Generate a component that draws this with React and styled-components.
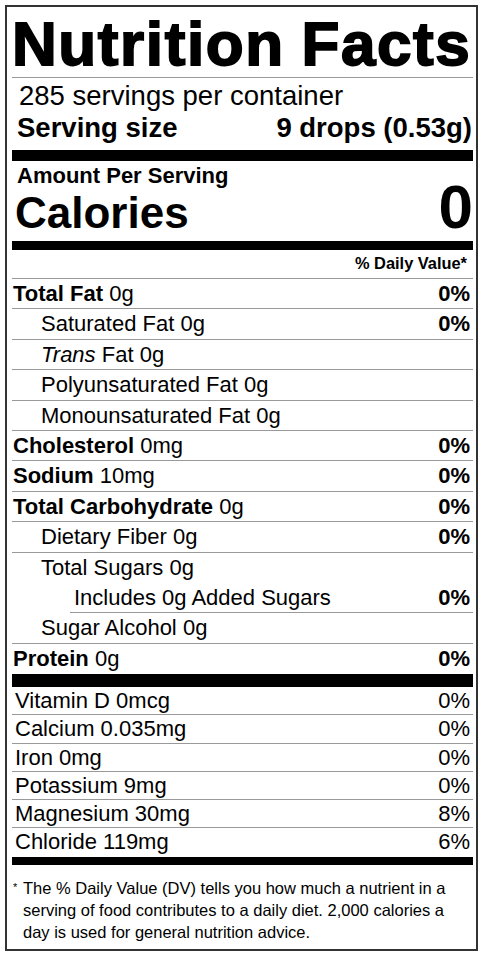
import React from 'react';
import styled, { createGlobalStyle } from 'styled-components';

const nutrients = [
    { name: 'Total Fat', amount: '0g', dv: '0%', bold: true },
    { name: 'Saturated Fat', amount: '0g', dv: '0%', indent: 1 },
    { name: 'Fat', amount: '0g', indent: 1, trans: true },
    { name: 'Polyunsaturated Fat', amount: '0g', indent: 1 },
    { name: 'Monounsaturated Fat', amount: '0g', indent: 1 },
    { name: 'Cholesterol', amount: '0mg', dv: '0%', bold: true },
    { name: 'Sodium', amount: '10mg', dv: '0%', bold: true },
    { name: 'Total Carbohydrate', amount: '0g', dv: '0%', bold: true },
    { name: 'Dietary Fiber', amount: '0g', dv: '0%', indent: 1 },
    { name: 'Total Sugars', amount: '0g', indent: 1, noRule: true },
    { name: 'Includes 0g Added Sugars', dv: '0%', indent: 2 },
    { name: 'Sugar Alcohol', amount: '0g', indent: 1 },
    { name: 'Protein', amount: '0g', dv: '0%', bold: true, noRule: true },
];

const vitamins = [
    { name: 'Vitamin D 0mcg', dv: '0%' },
    { name: 'Calcium 0.035mg', dv: '0%' },
    { name: 'Iron 0mg', dv: '0%' },
    { name: 'Potassium 9mg', dv: '0%' },
    { name: 'Magnesium 30mg', dv: '8%' },
    { name: 'Chloride 119mg', dv: '6%', last: true },
];

const App = () => {
    return <>
        <GlobalStyle />
        <Label>
            <Title>Nutrition Facts</Title>
            <Servings>
                <PerContainer>285 servings per container</PerContainer>
                <ServingSize>
                    <span>Serving size</span>
                    <span>9 drops (0.53g)</span>
                </ServingSize>
            </Servings>
            <ThickBar $h={11} />
            <CaloriesBlock>
                <div>
                    <AmountPer>Amount Per Serving</AmountPer>
                    <CaloriesLabel>Calories</CaloriesLabel>
                </div>
                <CaloriesValue>0</CaloriesValue>
            </CaloriesBlock>
            <ThickBar $h={9} $mt={3} />
            <DvHeader>% Daily Value*</DvHeader>
            {nutrients.map((n, i) => (
                <NutrientRow key={i} $indent={n.indent || 0} $noRule={n.noRule}>
                    <span>
                        {n.trans && <><i>Trans</i> </>}
                        {n.bold ? <b>{n.name}</b> : n.name}
                        {n.amount && <> {n.amount}</>}
                    </span>
                    {n.dv && <b>{n.dv}</b>}
                </NutrientRow>
            ))}
            <ThickBar $h={13} />
            {vitamins.map((v, i) => (
                <VitaminRow key={i} $last={v.last}>
                    <span>{v.name}</span>
                    <span>{v.dv}</span>
                </VitaminRow>
            ))}
            <ThickBar $h={8} $mt={1} />
            <Footnote>
                <Asterisk>*</Asterisk>
                <p>The % Daily Value (DV) tells you how much a nutrient in a serving of food contributes to a daily diet. 2,000 calories a day is used for general nutrition advice.</p>
            </Footnote>
        </Label>
    </>;
};

const GlobalStyle = createGlobalStyle`
  body {
    margin: 0;
    background: #fff;
    color: #000;
    font-family: "Liberation Sans", Arial, sans-serif;
  }
`

const Label = styled.div`
  box-sizing: border-box;
  width: 473px;
  margin: 5px;
  border: 2px solid #333;
  padding: 0 3px 0 5px;
`

const Title = styled.h1`
  margin: 0;
  padding-top: 4px;
  font-size: 62px;
  font-weight: 900;
  line-height: 66px;
  letter-spacing: 1.6px;
  word-spacing: -2px;
  white-space: nowrap;
  -webkit-text-stroke: 1.8px #000;
  border-bottom: 1px solid #999;
`

const Servings = styled.div`
  padding: 3px 1px 5px 5px;
`

const PerContainer = styled.div`
  font-size: 27.5px;
  line-height: 30px;
  padding-left: 2px;
`

const ServingSize = styled.div`
  display: flex;
  justify-content: space-between;
  font-size: 27.5px;
  font-weight: bold;
  line-height: 34px;
`

const ThickBar = styled.div`
  height: ${p => p.$h}px;
  margin-top: ${p => p.$mt || 0}px;
  background: #000;
`

const CaloriesBlock = styled.div`
  display: flex;
  justify-content: space-between;
  align-items: flex-end;
  padding: 3px 0 0 5px;
`

const AmountPer = styled.div`
  font-size: 22px;
  font-weight: bold;
  line-height: 24px;
`

const CaloriesLabel = styled.div`
  font-size: 44px;
  font-weight: bold;
  line-height: 50px;
  margin-left: -2px;
`

const CaloriesValue = styled.div`
  font-size: 62px;
  font-weight: bold;
  line-height: 1;
`

const DvHeader = styled.div`
  text-align: right;
  font-size: 16.4px;
  font-weight: bold;
  line-height: 26px;
  padding: 0 6px 2px 0;
  border-bottom: 1px solid #999;
`

const NutrientRow = styled.div`
  display: flex;
  justify-content: space-between;
  font-size: 22px;
  line-height: 29.4px;
  padding: 0 3px 0 ${p => (p.$indent === 2 ? 4 : p.$indent === 1 ? 29 : 1)}px;
  margin-left: ${p => (p.$indent === 2 ? 58 : 0)}px;
  border-bottom: 1px solid ${p => (p.$noRule ? 'transparent' : '#999')};
  b { font-weight: bold; }
  i { font-style: italic; }
`

const VitaminRow = styled.div`
  display: flex;
  justify-content: space-between;
  font-size: 22px;
  line-height: ${p => (p.$last ? 28 : 27.2)}px;
  padding: 0 3px 0 3px;
  border-bottom: ${p => (p.$last ? 'none' : '1px solid #999')};
`

const Footnote = styled.div`
  display: flex;
  padding: 12px 0 6px 1px;
  font-size: 16.5px;
  line-height: 22px;
  p {
    margin: 0;
  }
`

const Asterisk = styled.span`
  flex: 0 0 10px;
  font-size: 11px;
  line-height: 1;
  margin-top: 5px;
`

export default App;
